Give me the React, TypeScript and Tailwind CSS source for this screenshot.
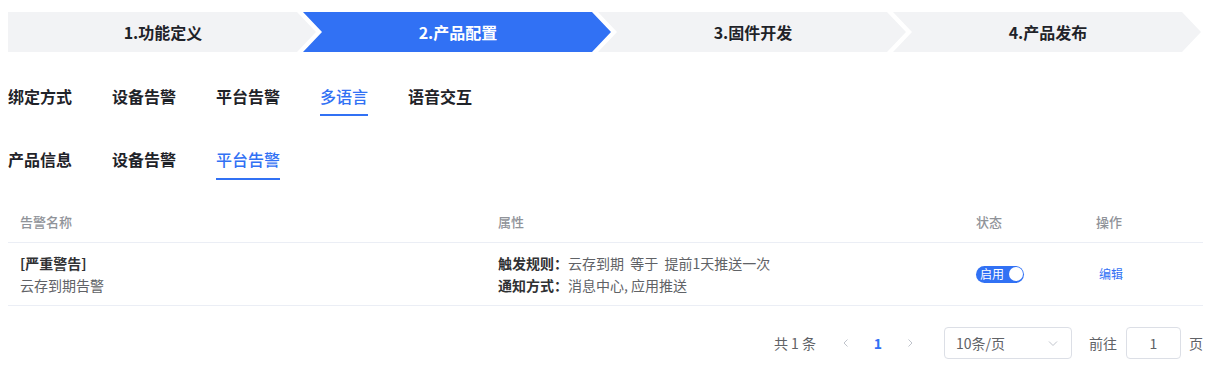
import React from "react";

const steps = ["1.功能定义", "2.产品配置", "3.固件开发", "4.产品发布"];

function Steps() {
  return (
    <div className="flex h-10">
      {steps.map((s, i) => {
        const active = i === 1;
        const clip =
          i === 0
            ? "[clip-path:polygon(0_0,calc(100%_-_19px)_0,100%_50%,calc(100%_-_19px)_100%,0_100%)]"
            : "[clip-path:polygon(0_0,calc(100%_-_19px)_0,100%_50%,calc(100%_-_19px)_100%,0_100%,19px_50%)]";
        return (
          <div
            key={s}
            className={`w-[308px] shrink-0 pl-[2px] flex items-center justify-center text-[16px] font-bold ${clip} ${
              i > 0 ? "-ml-[13px]" : ""
            } ${active ? "bg-[#3171f4] text-white" : "bg-[#f2f3f5] text-[#1f2329]"}`}
          >
            {s}
          </div>
        );
      })}
    </div>
  );
}

function Tabs({ items, active, className }: { items: string[]; active: number; className: string }) {
  return (
    <div className={`flex gap-10 ${className}`}>
      {items.map((t, i) => (
        <div
          key={t + i}
          className={`text-[16px] leading-6 border-b-2 ${
            i === active
              ? "text-[#3171f4] border-[#3171f4] font-medium"
              : "text-[#1f2329] border-transparent font-semibold"
          }`}
        >
          {t}
        </div>
      ))}
    </div>
  );
}

function Toggle() {
  return (
    <div className="relative w-[48px] h-[17px] rounded-full bg-[#3171f4] flex items-center">
      <span className="text-white text-[12px] leading-none pl-[4px]">启用</span>
      <span className="absolute right-[1.5px] top-[1.5px] w-[14px] h-[14px] rounded-full bg-white" />
    </div>
  );
}

export default function App() {
  return (
    <div className="w-[1213px] h-[370px] bg-white pl-2 pr-[10px] pt-3 [font-family:'Noto_Sans_CJK_SC','Noto_Sans',sans-serif]">
      <Steps />

      <Tabs
        items={["绑定方式", "设备告警", "平台告警", "多语言", "语音交互"]}
        active={3}
        className="mt-8 [&>div]:pb-[6px]"
      />
      <Tabs
        items={["产品信息", "设备告警", "平台告警"]}
        active={2}
        className="mt-[31px] [&>div]:pb-[7px]"
      />

      <div className="mt-[22px]">
        <div className="grid grid-cols-[478px_478px_120px_1fr] h-[41px] items-center border-b border-[#ebeef5] text-[13px] text-[#909399] font-medium">
          <div className="pl-3">告警名称</div>
          <div className="pl-3">属性</div>
          <div className="pl-3">状态</div>
          <div className="pl-3">操作</div>
        </div>
        <div className="grid grid-cols-[478px_478px_120px_1fr] h-[63px] items-center border-b border-[#ebeef5] text-[14px] text-[#606266]">
          <div className="pl-3 leading-[22px]">
            <div className="font-bold text-[#303133]">[严重警告]</div>
            <div>云存到期告警</div>
          </div>
          <div className="pl-3 leading-[22px]">
            <div>
              <span className="font-semibold text-[#303133]">触发规则：</span>
              云存到期&nbsp;&nbsp;等于&nbsp;&nbsp;提前1天推送一次
            </div>
            <div>
              <span className="font-semibold text-[#303133]">通知方式：</span>
              消息中心, 应用推送
            </div>
          </div>
          <div className="pl-3">
            <Toggle />
          </div>
          <div className="pl-[15px] text-[12px] text-[#3171f4]">编辑</div>
        </div>
      </div>

      <div className="mt-[21px] flex items-center justify-end text-[14px] text-[#606266]">
        <span className="mr-[14px]">共 1 条</span>
        <div className="flex items-center">
          <span className="w-8 flex justify-center text-[#c0c4cc]">
            <svg width="10" height="10" viewBox="0 0 10 10" fill="none">
              <path d="M6.5 1.5 3 5l3.5 3.5" stroke="currentColor" strokeWidth="1" />
            </svg>
          </span>
          <span className="w-8 text-center text-[#3171f4] font-bold">1</span>
          <span className="w-8 flex justify-center text-[#c0c4cc]">
            <svg width="10" height="10" viewBox="0 0 10 10" fill="none">
              <path d="M3.5 1.5 7 5 3.5 8.5" stroke="currentColor" strokeWidth="1" />
            </svg>
          </span>
        </div>
        <div className="ml-[18px] w-[128px] h-[32px] border border-[#dcdfe6] rounded-[4px] flex items-center justify-between pl-[11px] pr-[12px]">
          <span>10条/页</span>
          <svg width="12" height="12" viewBox="0 0 12 12" fill="none" className="text-[#c0c4cc]">
            <path d="M2 4.5 6 8.5l4-4" stroke="currentColor" strokeWidth="1" />
          </svg>
        </div>
        <span className="ml-[17px]">前往</span>
        <div className="ml-[9px] w-[55px] h-[32px] border border-[#dcdfe6] rounded-[4px] flex items-center justify-center">
          1
        </div>
        <span className="ml-[8px]">页</span>
      </div>
    </div>
  );
}
